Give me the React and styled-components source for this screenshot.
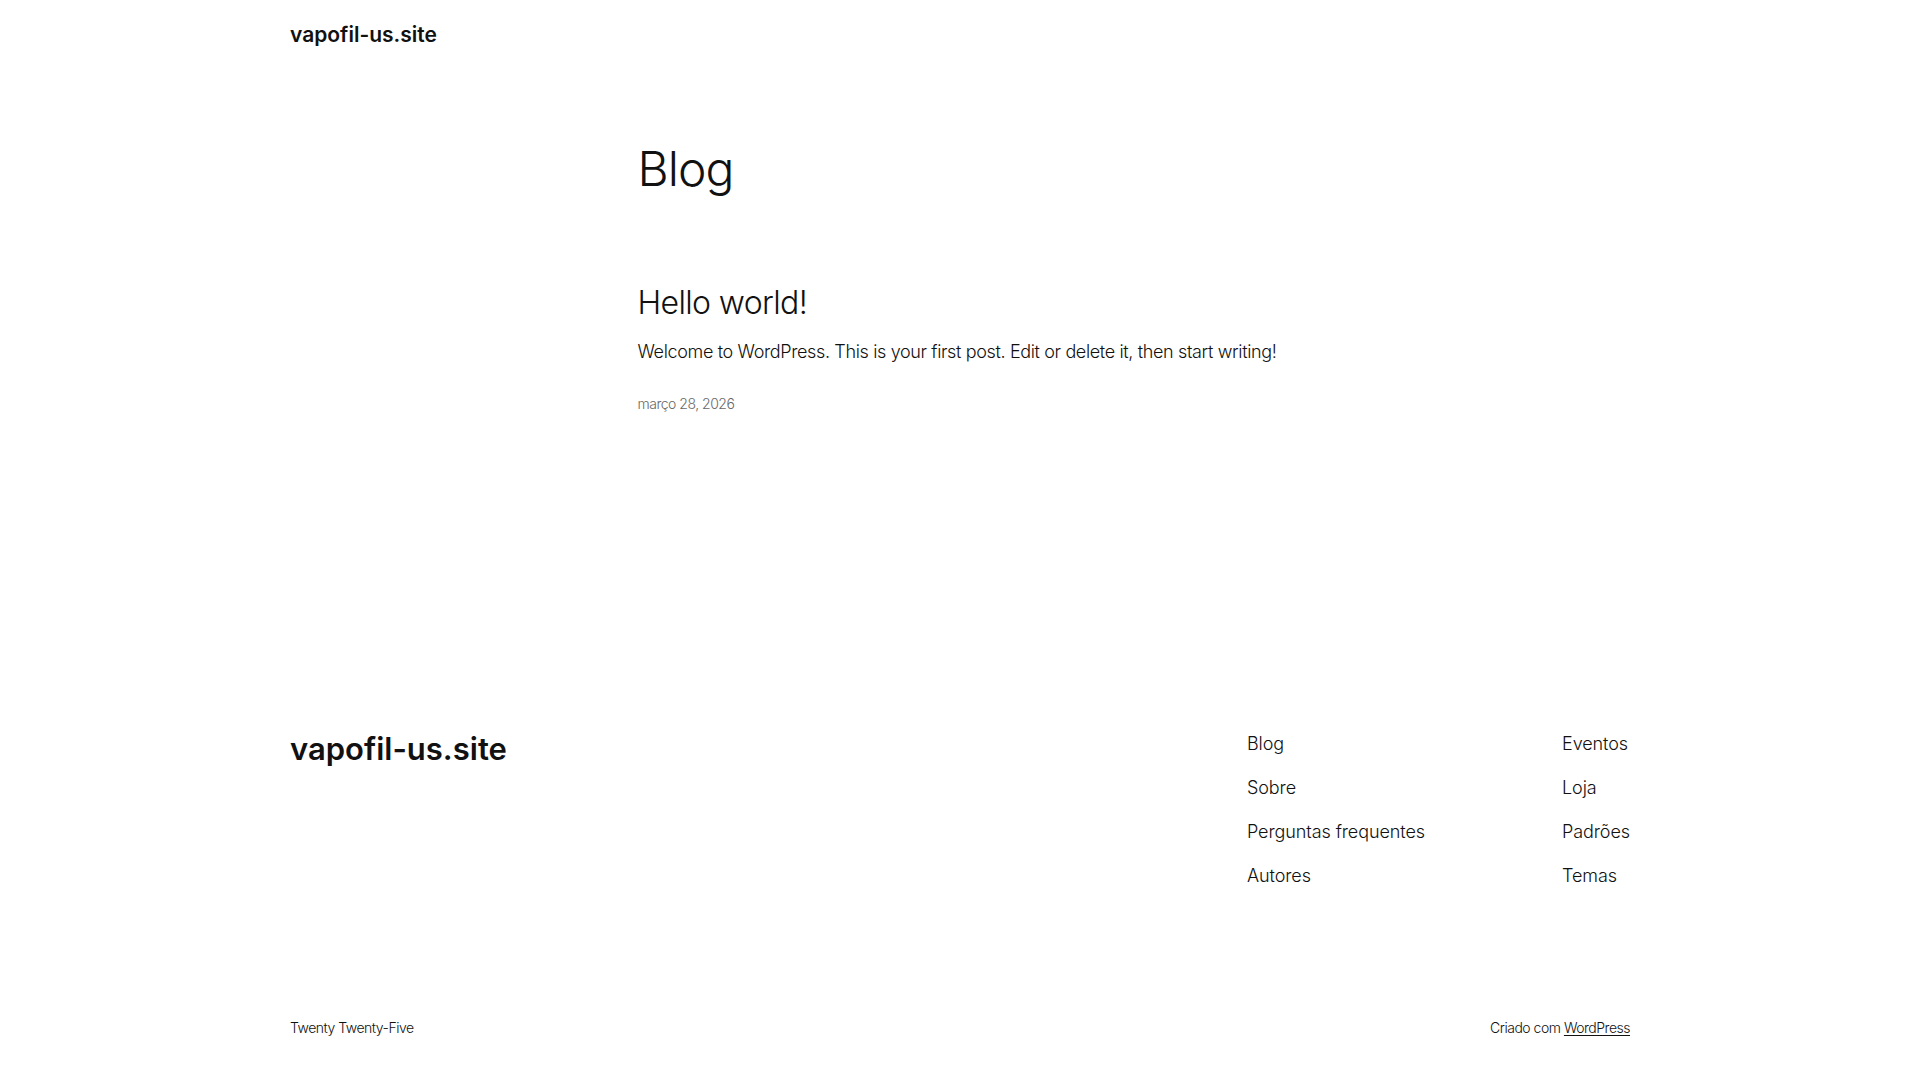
import React from 'react'
import styled, { createGlobalStyle } from 'styled-components'

const GlobalStyle = createGlobalStyle`
    html, body {
        margin: 0;
        padding: 0;
        background: #ffffff;
    }

    body {
        font-family: Inter, "Noto Sans", "Liberation Sans", sans-serif;
        color: #111111;
        -webkit-font-smoothing: antialiased;
    }

    a {
        color: inherit;
        text-decoration: none;
    }
`

const Page = styled.div`
    width: 1340px;
    margin: 0 auto;
    min-height: 1080px;
    display: flex;
    flex-direction: column;
`

const Header = styled.header`
    padding: 21px 0;
`

const SiteTitle = styled.a`
    display: block;
    font-size: ${props => props.big ? '31px' : '21px'};
    line-height: ${props => props.big ? '36px' : '28px'};
    font-weight: 600;
    letter-spacing: 0;
`

const Main = styled.main`
    width: 645px;
    margin: 0 auto;
    padding: 70px 0 0;
`

const PageTitle = styled.h1`
    margin: 0;
    font-size: 48px;
    line-height: 57.6px;
    font-weight: 300;
    letter-spacing: -0.02em;
`

const Post = styled.article`
    margin-top: 86px;
`

const PostTitle = styled.h2`
    margin: 0;
    font-size: 32px;
    line-height: 38.4px;
    font-weight: 300;
    letter-spacing: -0.02em;
`

const Excerpt = styled.p`
    margin: 16px 0 0;
    font-size: 18px;
    line-height: 28.8px;
    font-weight: 300;
    letter-spacing: -0.02em;
    white-space: nowrap;
`

const PostDate = styled.time`
    display: block;
    margin-top: 27px;
    font-size: 14px;
    line-height: 19.6px;
    font-weight: 300;
    letter-spacing: -0.035em;
    color: #686868;
`

const Footer = styled.footer`
    margin-top: 318px;
`

const FooterTop = styled.div`
    display: flex;
    justify-content: space-between;
    align-items: flex-start;
`

const NavGroup = styled.nav`
    width: 383px;
    display: flex;
    justify-content: space-between;
`

const NavColumn = styled.div`
    display: flex;
    flex-direction: column;
    gap: 18.8px;
`

const NavLink = styled.a`
    font-size: 18px;
    line-height: 25.2px;
    font-weight: 300;
    letter-spacing: -0.005em;
`

const FooterBottom = styled.div`
    margin-top: 129px;
    padding-bottom: 41px;
    display: flex;
    justify-content: space-between;
    font-size: 14px;
    line-height: 19.6px;
    font-weight: 300;
    letter-spacing: -0.035em;
`

const Credit = styled.p`
    margin: 0;

    a {
        text-decoration: underline;
        text-underline-offset: 2px;
    }
`

const columns = [
    ['Blog', 'Sobre', 'Perguntas frequentes', 'Autores'],
    ['Eventos', 'Loja', 'Padrões', 'Temas']
]

const App = () => (
    <>
        <GlobalStyle />
        <Page>
            <Header>
                <SiteTitle href='#'>vapofil-us.site</SiteTitle>
            </Header>

            <Main>
                <PageTitle>Blog</PageTitle>
                <Post>
                    <PostTitle>Hello world!</PostTitle>
                    <Excerpt>Welcome to WordPress. This is your first post. Edit or delete it, then start writing!</Excerpt>
                    <PostDate>março 28, 2026</PostDate>
                </Post>
            </Main>

            <Footer>
                <FooterTop>
                    <SiteTitle big href='#'>vapofil-us.site</SiteTitle>
                    <NavGroup>
                        {columns.map((col, i) => (
                            <NavColumn key={i}>
                                {col.map(item => <NavLink key={item} href='#'>{item}</NavLink>)}
                            </NavColumn>
                        ))}
                    </NavGroup>
                </FooterTop>
                <FooterBottom>
                    <Credit>Twenty Twenty-Five</Credit>
                    <Credit>Criado com <a href='#'>WordPress</a></Credit>
                </FooterBottom>
            </Footer>
        </Page>
    </>
)

export default App
